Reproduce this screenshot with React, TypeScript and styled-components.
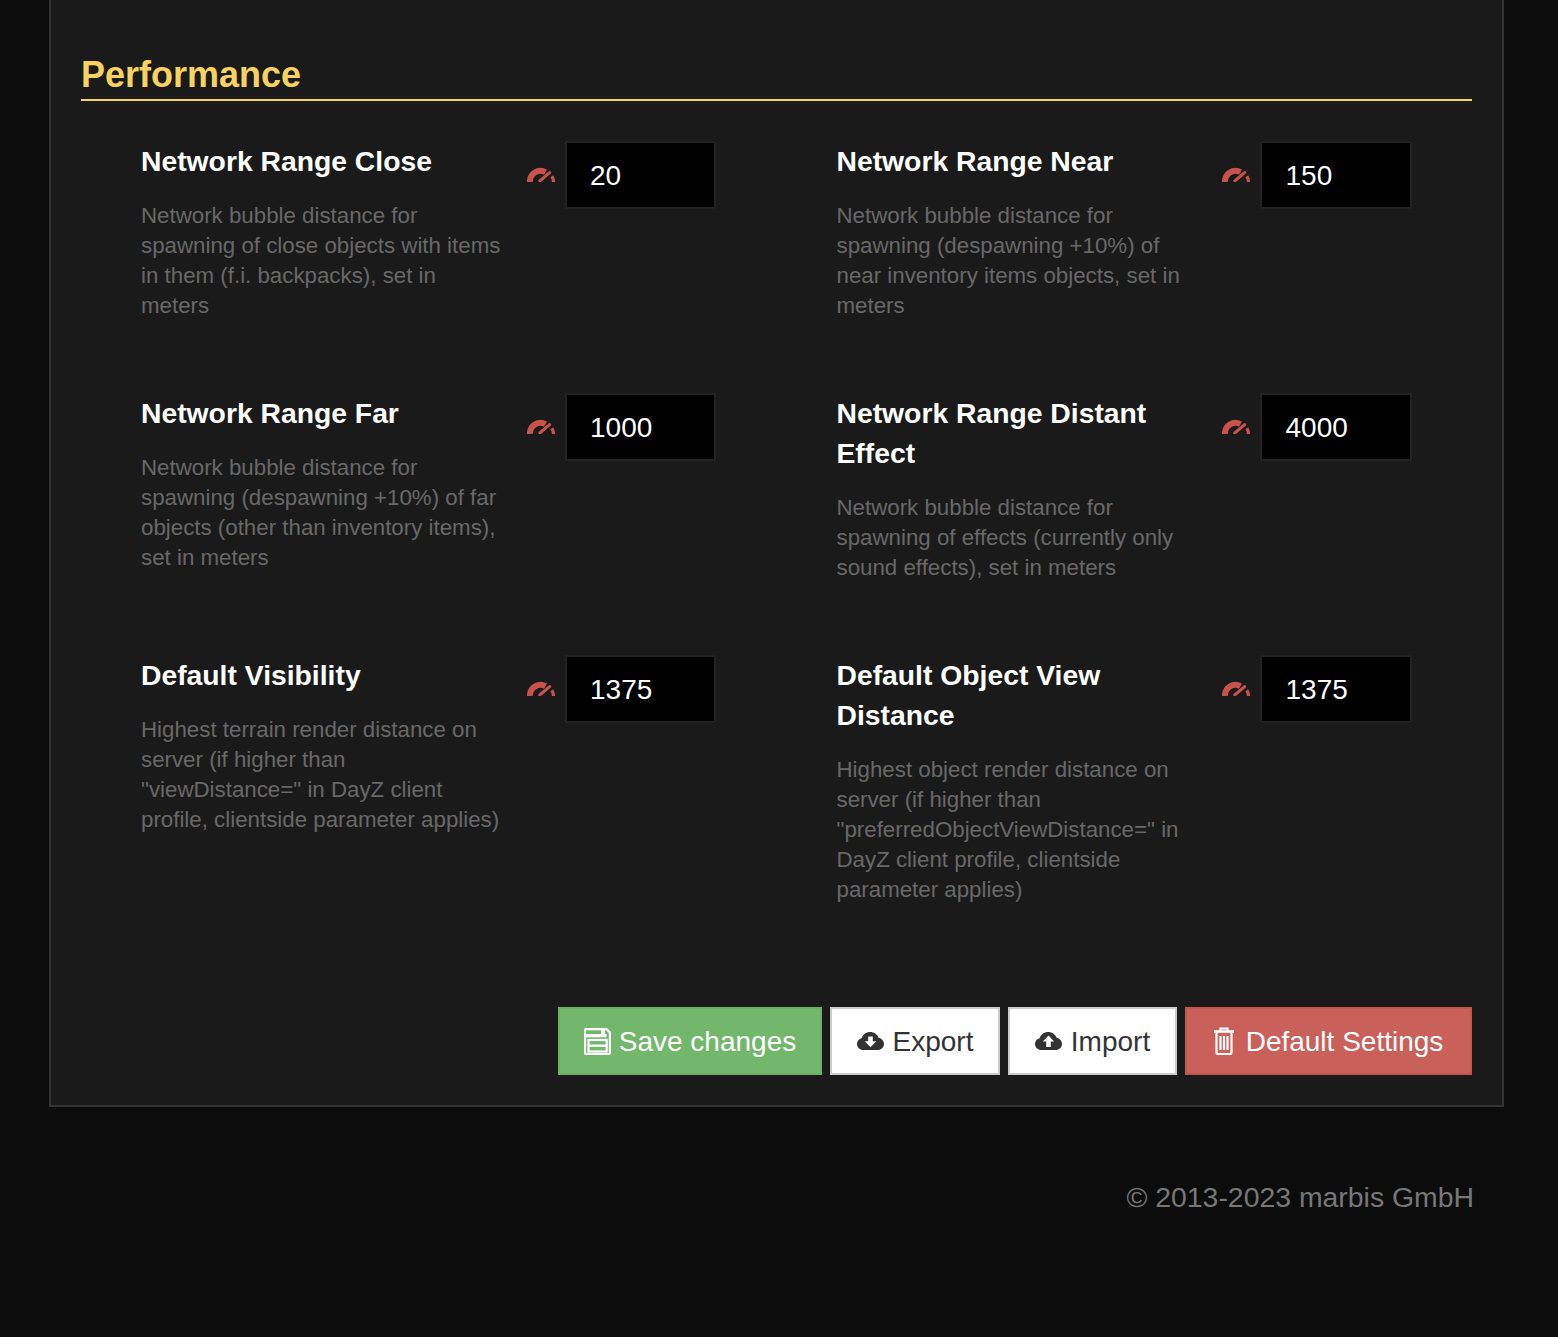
import styled, { createGlobalStyle } from 'styled-components'

const GlobalStyle = createGlobalStyle`
  html, body {
    margin: 0;
    padding: 0;
    background: #0c0c0c;
  }
  * {
    box-sizing: border-box;
  }
`

const Page = styled.div`
  width: 1558px;
  height: 1337px;
  overflow: hidden;
  padding: 0 54px 0 49px;
  font-family: "Liberation Sans", Arial, sans-serif;
  background: #0c0c0c;
`

const Panel = styled.section`
  padding: 53px 30px 30px;
  background: #1a1a1a;
  border: 2px solid #333;
  border-top: 0;
`

const SectionTitle = styled.h2`
  margin: 0 0 40px;
  padding-bottom: 2px;
  color: #f6d25f;
  font-size: 36px;
  font-weight: 700;
  line-height: 44px;
  border-bottom: 2px solid #f6d25f;
`

const Grid = styled.div`
  display: grid;
  grid-template-columns: minmax(0, 1fr) minmax(0, 1fr);
`

const Field = styled.div`
  display: flex;
  align-items: flex-start;
  padding: 0 60px 72px;
`

const FieldText = styled.div`
  width: 385.5px;
  flex-shrink: 0;
  padding-right: 20px;
`

const FieldTitle = styled.h4`
  margin: 0 0 20px;
  color: #fff;
  font-size: 28.3px;
  font-weight: 700;
  line-height: 40px;
`

const FieldDesc = styled.p`
  margin: 0;
  color: #686868;
  font-size: 22.3px;
  line-height: 30px;
`

const GaugeBox = styled.span`
  display: flex;
  flex-shrink: 0;
  width: 38px;
  padding-top: 26px;
`

const ValueInput = styled.input`
  flex-shrink: 0;
  width: 151.5px;
  height: 68px;
  padding: 2px 23.5px 0;
  color: #fff;
  background: #000;
  border: 2px solid #222;
  outline: none;
  font-family: inherit;
  font-size: 28px;
`

const Actions = styled.div`
  display: flex;
  justify-content: flex-end;
  gap: 8px;
  margin-top: 30px;
`

type Variant = 'success' | 'plain' | 'danger'

const Button = styled.button<{ $variant: Variant; $width: number }>`
  display: inline-flex;
  align-items: center;
  justify-content: center;
  gap: ${p => (p.$variant === 'danger' ? '12px' : p.$variant === 'plain' ? '9px' : '8px')};
  width: ${p => p.$width}px;
  height: 68px;
  padding: 2px 0 0;
  font-family: inherit;
  font-size: 28px;
  color: ${p => (p.$variant === 'plain' ? '#333' : '#fff')};
  background: ${p =>
    p.$variant === 'success' ? '#72b76c' : p.$variant === 'danger' ? '#c9605a' : '#fff'};
  border: 2px solid
    ${p => (p.$variant === 'success' ? '#6bb065' : p.$variant === 'danger' ? '#c45650' : '#ccc')};

  svg {
    flex-shrink: 0;
    margin-top: -2px;
  }
`

const Footer = styled.footer`
  margin-top: 70px;
  padding-right: 30px;
  color: #777;
  font-size: 28.4px;
  line-height: 40px;
  text-align: right;
`

const Gauge = () => (
  <svg width="28" height="15" viewBox="0 0 28 15" fill="none">
    <path d="M3 15A10.5 10.5 0 0 1 18.5 5.2" stroke="#c9534c" strokeWidth="6" />
    <path d="M12.8 14 22.6 5.6" stroke="#c9534c" strokeWidth="3" strokeLinecap="round" />
    <path d="M24.8 9.3c1 1.4 1.5 3 1.7 5.7" stroke="#c9534c" strokeWidth="3.2" />
  </svg>
)

const SaveIcon = () => (
  <svg width="27" height="27" viewBox="0 0 27 27" fill="none" stroke="currentColor" strokeWidth="2.2">
    <path d="M2 1.1h20.5L25.9 4.5V25a1 1 0 0 1-1 1H2a1 1 0 0 1-1-1V2a1 1 0 0 1 1-1z" />
    <path d="M1 7.7h21.5" strokeWidth="3.2" />
    <path d="M17.5 2h3v4h-3z" fill="currentColor" strokeWidth="1" />
    <rect x="4.5" y="12" width="18.2" height="11.5" />
    <path d="M4.5 17.7h18.2" strokeWidth="2.4" />
  </svg>
)

const TrashIcon = () => (
  <svg width="20" height="28" viewBox="0 0 20 28" fill="none" stroke="currentColor" strokeWidth="2.2">
    <path d="M6.5 4V1.5h7V4" />
    <path d="M0 4.5h20" strokeWidth="2.6" />
    <path d="M2.5 5v20.5A1.5 1.5 0 0 0 4 27h12a1.5 1.5 0 0 0 1.5-1.5V5" />
    <path d="M6.5 9v14M10 9v14M13.5 9v14" />
  </svg>
)

const CLOUD =
  'M6.5 18C2.9 18 0 15.4 0 12c0-2.8 1.9-5.1 4.6-5.8C5.6 2.6 9.1 0 13.2 0c3.8 0 7.1 2.3 8.4 5.7C24.7 6.3 27 8.9 27 12c0 3.4-2.9 6-6.5 6z'

const CloudDownIcon = () => (
  <svg width="27" height="18" viewBox="0 0 27 18">
    <path fill="currentColor" fillRule="evenodd" d={`${CLOUD}M11.2 4.5v4.7H7.8l5.7 6 5.7-6h-3.4V4.5z`} />
  </svg>
)

const CloudUpIcon = () => (
  <svg width="27" height="18" viewBox="0 0 27 18">
    <path fill="currentColor" fillRule="evenodd" d={`${CLOUD}M13.5 3.5l-5.7 6h3.4V15h4.6V9.5h3.4z`} />
  </svg>
)

const fields = [
  {
    title: 'Network Range Close',
    desc: 'Network bubble distance for spawning of close objects with items in them (f.i. backpacks), set in meters',
    value: '20',
  },
  {
    title: 'Network Range Near',
    desc: 'Network bubble distance for spawning (despawning +10%) of near inventory items objects, set in meters',
    value: '150',
  },
  {
    title: 'Network Range Far',
    desc: 'Network bubble distance for spawning (despawning +10%) of far objects (other than inventory items), set in meters',
    value: '1000',
  },
  {
    title: 'Network Range Distant Effect',
    desc: 'Network bubble distance for spawning of effects (currently only sound effects), set in meters',
    value: '4000',
  },
  {
    title: 'Default Visibility',
    desc: 'Highest terrain render distance on server (if higher than "viewDistance=" in DayZ client profile, clientside parameter applies)',
    value: '1375',
  },
  {
    title: 'Default Object View Distance',
    desc: 'Highest object render distance on server (if higher than "preferredObjectViewDistance=" in DayZ client profile, clientside parameter applies)',
    value: '1375',
  },
]

const App = () => {
  return (
    <Page>
      <GlobalStyle />
      <Panel>
        <SectionTitle>Performance</SectionTitle>
        <Grid>
          {fields.map(field => (
            <Field key={field.title}>
              <FieldText>
                <FieldTitle>{field.title}</FieldTitle>
                <FieldDesc>{field.desc}</FieldDesc>
              </FieldText>
              <GaugeBox>
                <Gauge />
              </GaugeBox>
              <ValueInput defaultValue={field.value} />
            </Field>
          ))}
        </Grid>
        <Actions>
          <Button $variant="success" $width={264}>
            <SaveIcon />
            Save changes
          </Button>
          <Button $variant="plain" $width={170}>
            <CloudDownIcon />
            Export
          </Button>
          <Button $variant="plain" $width={169}>
            <CloudUpIcon />
            Import
          </Button>
          <Button $variant="danger" $width={287}>
            <TrashIcon />
            Default Settings
          </Button>
        </Actions>
      </Panel>
      <Footer>© 2013-2023 marbis GmbH</Footer>
    </Page>
  )
}

export default App
